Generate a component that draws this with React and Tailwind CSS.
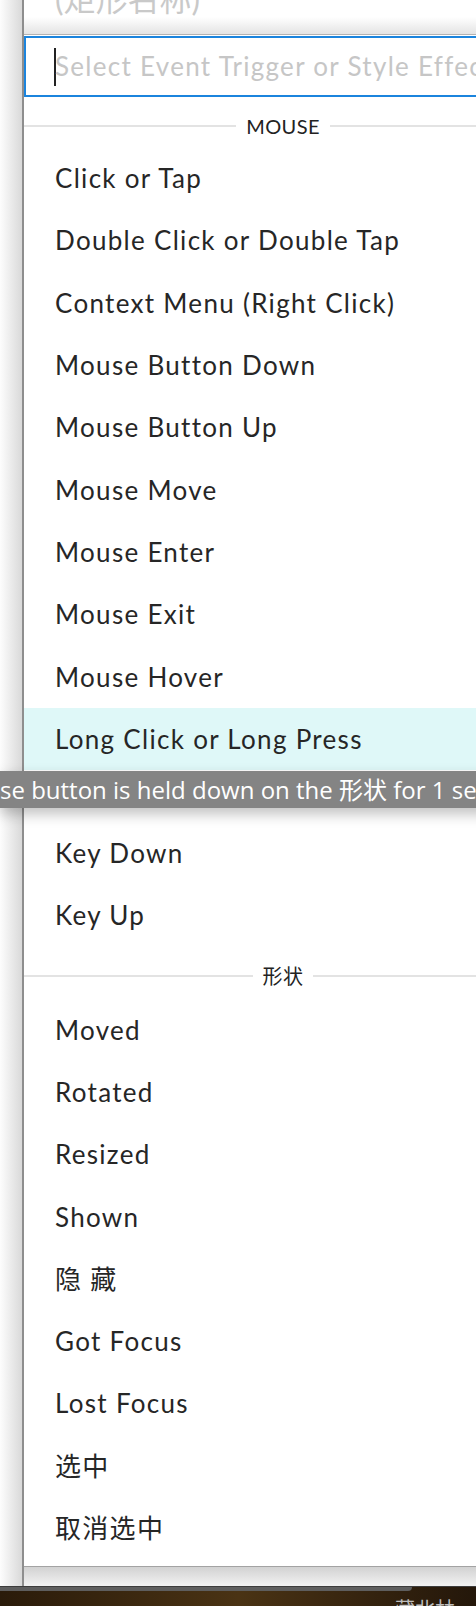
import React from "react";

const mouseEvents = [
  "Click or Tap",
  "Double Click or Double Tap",
  "Context Menu (Right Click)",
  "Mouse Button Down",
  "Mouse Button Up",
  "Mouse Move",
  "Mouse Enter",
  "Mouse Exit",
  "Mouse Hover",
  "Long Click or Long Press",
];

const keyEvents = ["Key Down", "Key Up"];

const shapeEvents = ["Moved", "Rotated", "Resized", "Shown", "隐 藏", "Got Focus", "Lost Focus", "选中", "取消选中"];

const font = "font-['Lato','Noto_Sans_CJK_SC',sans-serif]";

function Header({ label, first }) {
  return (
    <div className={`flex items-center gap-[10px] ${first ? "h-[50px] pt-[8px]" : "h-[52px] pt-[6px]"}`}>
      <div className="h-[2px] flex-1 bg-[#e3e3e3]" />
      <span className="text-[20px] leading-none tracking-[0.02em] text-[#222]">{label}</span>
      <div className="h-[2px] flex-1 bg-[#e3e3e3]" />
    </div>
  );
}

function Row({ label, active }) {
  return (
    <div
      className={`flex h-[62.3px] items-center pl-[31px] pt-px text-[26px] tracking-[0.05em] text-[#262626] ${
        active ? "bg-[#dff8f8]" : ""
      }`}
    >
      {label}
    </div>
  );
}

export default function App() {
  return (
    <div className={`relative flex h-[1606px] w-[476px] flex-col overflow-hidden bg-white ${font}`}>
      <div className="flex h-[1586px] shrink-0">
        {/* window edge behind the popup */}
        <div className="w-[22px] shrink-0 bg-gradient-to-r from-[#fdfdfd] to-[#d9d9d9]" />
        <div className="flex min-w-0 flex-1 flex-col overflow-hidden border-l-2 border-[#8e8e8e]">
          <div className="h-[34px] shrink-0 overflow-hidden bg-gradient-to-b from-white via-white to-[#e4e4e4] pl-[31px]">
            <div className="-mt-[17px] text-[32px] leading-none text-[#c9c9c9]">(矩形名称)</div>
          </div>

          {/* popup */}
          <div className="w-[518px] shrink-0 border-y border-t-[#b3b3b3] border-b-[#a3a3a3] bg-white pt-px pb-[7px]">
            <div className="flex h-[61px] items-center border-y-2 border-l-2 border-[#1b84dd] pl-[28px]">
              <span className="h-[38px] w-[2px] bg-[#222]" />
              <span className="-ml-px text-[26px] tracking-[0.05em] text-[#c6c6c6]">
                Select Event Trigger or Style Effect
              </span>
            </div>

            <Header label="MOUSE" first />
            {mouseEvents.map((e) => (
              <Row key={e} label={e} active={e === "Long Click or Long Press"} />
            ))}

            <Header label="KEYBOARD" />
            {keyEvents.map((e) => (
              <Row key={e} label={e} />
            ))}

            <Header label="形状" />
            {shapeEvents.map((e) => (
              <Row key={e} label={e} />
            ))}
          </div>

          <div className="flex-1 bg-gradient-to-b from-[#d2d2d2] to-[#f2f2f2]" />
        </div>
      </div>

      {/* desktop strip at the bottom */}
      <div className="relative flex-1 border-t border-[#3c3c3c] bg-gradient-to-r from-[#2a1b0a] via-[#4a3314] to-[#24170a]">
        <div className="h-[4px] w-[412px] rounded-br-[6px] bg-[#5e5e5e]" />
        <div className="absolute left-[395px] top-[12px] text-[20px] leading-none text-[#bdbdbd]">藏北林</div>
      </div>

      {/* tooltip */}
      <div className="absolute left-0 top-[771px] flex h-[37px] w-[560px] items-center whitespace-nowrap bg-[#848484] font-['Open_Sans','Noto_Sans_CJK_SC',sans-serif] text-[24px] leading-none text-white shadow-[0_6px_14px_rgba(0,0,0,0.25)]">
        <span className="relative">
          <span className="absolute right-full">Triggered when the mou</span>
          se button is held down on the 形状 for 1 second
        </span>
      </div>
    </div>
  );
}
